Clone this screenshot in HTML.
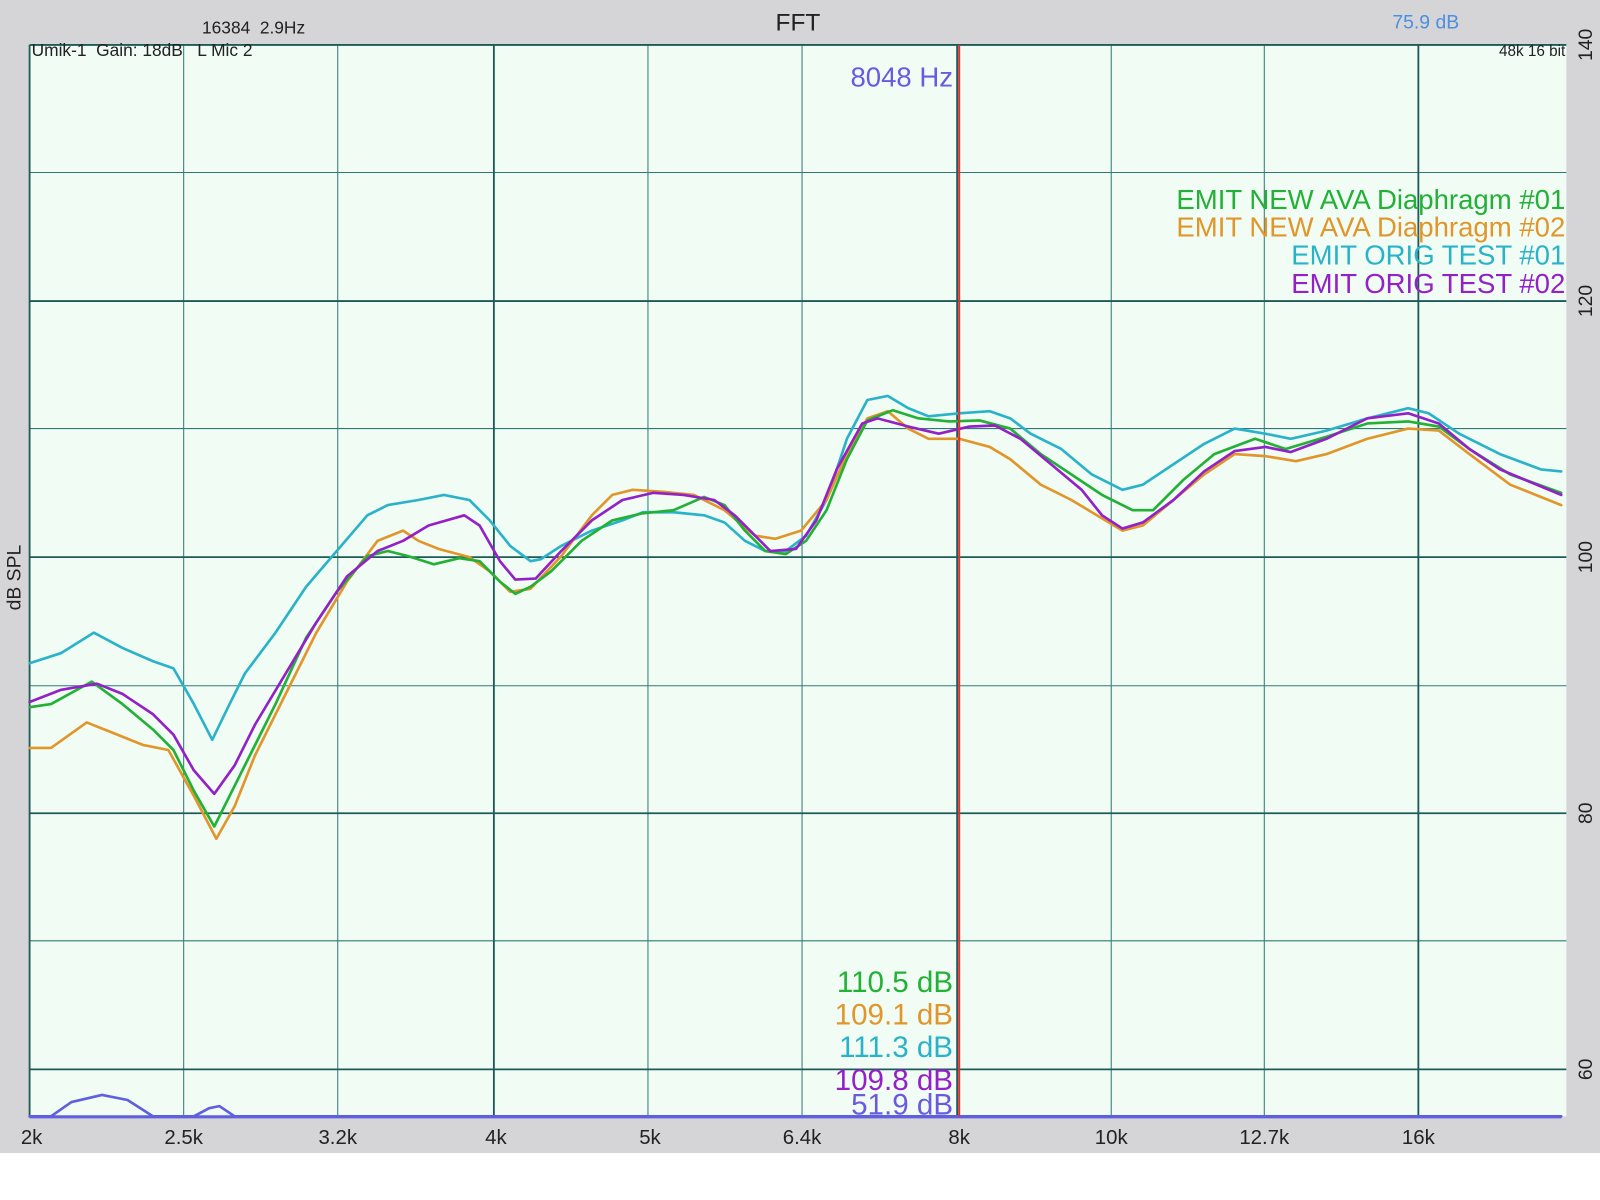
<!DOCTYPE html>
<html><head><meta charset="utf-8"><style>
html,body{margin:0;padding:0;background:#fff;width:1600px;height:1200px;overflow:hidden}
svg{display:block}
text{font-family:"Liberation Sans",sans-serif;white-space:pre}
</style></head><body>
<svg width="1600" height="1200" viewBox="0 0 1568 1176" preserveAspectRatio="none">
<rect x="0" y="0" width="1568" height="1130" fill="#d5d5d7"/>
<rect x="29" y="44" width="1506" height="1050" fill="#f1fcf5"/>
<g stroke="#2f7a78" stroke-width="1">
<line x1="180" y1="44" x2="180" y2="1094"/><line x1="331" y1="44" x2="331" y2="1094"/>
<line x1="635" y1="44" x2="635" y2="1094"/><line x1="786" y1="44" x2="786" y2="1094"/>
<line x1="1089" y1="44" x2="1089" y2="1094"/><line x1="1239" y1="44" x2="1239" y2="1094"/>
<line x1="29" y1="169" x2="1535" y2="169"/><line x1="29" y1="420" x2="1535" y2="420"/>
<line x1="29" y1="672" x2="1535" y2="672"/><line x1="29" y1="922" x2="1535" y2="922"/>
</g>
<g stroke="#1d5a58" stroke-width="1.8">
<line x1="29" y1="44" x2="29" y2="1094"/><line x1="484" y1="44" x2="484" y2="1094"/>
<line x1="938" y1="44" x2="938" y2="1094"/><line x1="1390" y1="44" x2="1390" y2="1094"/>
<line x1="29" y1="44" x2="1535" y2="44"/><line x1="29" y1="295" x2="1535" y2="295"/>
<line x1="29" y1="546" x2="1535" y2="546"/><line x1="29" y1="797" x2="1535" y2="797"/>
<line x1="29" y1="1048" x2="1535" y2="1048"/>
</g>
<g fill="none" stroke-width="2.6" stroke-linejoin="round" stroke-linecap="round">
<polyline stroke="#2ab3c8" points="29,650 60,640 92,620 120,635 150,648 170,655 190,690 208,725 225,690 240,660 270,620 300,575 330,540 360,505 380,495 410,490 435,485 460,490 480,510 500,535 520,550 530,548 550,535 580,520 610,510 630,502 660,502 690,505 710,512 730,530 750,540 770,540 790,525 810,490 830,430 850,392 870,388 890,400 910,408 940,405 970,403 990,410 1010,425 1040,440 1070,465 1100,480 1120,475 1150,455 1180,435 1210,420 1240,425 1265,430 1300,422 1340,410 1380,400 1400,405 1430,425 1470,445 1510,460 1530,462"/>
<polyline stroke="#e0962a" points="29,733 50,733 85,708 110,718 140,730 165,735 190,780 212,822 230,790 250,740 280,680 310,620 340,570 370,530 395,520 410,530 430,538 460,546 480,560 500,580 520,577 550,545 580,505 600,485 620,480 650,482 680,485 710,500 740,525 760,528 785,520 810,490 830,445 850,410 870,403 890,420 910,430 940,430 970,438 990,450 1020,475 1050,490 1080,508 1100,520 1120,515 1150,490 1180,465 1210,445 1240,447 1270,452 1300,445 1340,430 1380,420 1410,422 1440,445 1480,475 1530,495"/>
<polyline stroke="#22b036" points="29,693 50,690 90,668 120,690 150,715 170,735 190,775 210,810 225,780 245,740 270,690 300,625 330,580 360,545 380,540 400,545 425,553 450,547 470,550 490,570 505,582 520,575 540,560 570,530 600,510 630,503 660,500 690,487 710,495 730,520 750,540 770,543 790,530 810,500 830,450 850,412 875,402 900,410 930,413 960,412 990,420 1020,445 1050,465 1080,485 1110,500 1130,500 1160,470 1190,445 1230,430 1260,440 1300,428 1340,415 1380,413 1410,418 1440,440 1480,465 1530,483"/>
<polyline stroke="#9420c8" points="29,688 60,676 95,670 120,680 150,700 170,720 190,755 210,778 230,750 250,710 280,660 310,610 340,565 370,540 395,530 420,515 455,505 470,515 490,550 505,568 525,567 550,540 580,510 610,490 640,483 670,485 700,490 720,505 740,525 755,540 780,538 800,510 820,460 845,415 860,410 890,418 920,425 950,418 975,417 1000,430 1030,455 1060,480 1080,505 1100,518 1120,512 1150,490 1180,462 1210,442 1240,438 1265,443 1300,430 1340,410 1380,405 1410,415 1440,440 1470,460 1530,485"/>
<polyline stroke="#5f5fe0" points="29,1094 50,1094 70,1080 100,1073 125,1078 150,1094 175,1094 190,1094 205,1086 215,1084 230,1094 1530,1094"/>
</g>
<line x1="29" y1="1094.5" x2="1530" y2="1094.5" stroke="#5f5fe0" stroke-width="3"/>
<line x1="940" y1="44" x2="940" y2="1094" stroke="#e03030" stroke-width="2"/>
<text x="782" y="30" font-size="24" fill="#222" text-anchor="middle">FFT</text>
<text x="198" y="33" font-size="17" fill="#222">16384  2.9Hz</text>
<text x="31" y="55" font-size="17" fill="#222">Umik-1  Gain: 18dB   L Mic 2</text>
<text x="1430" y="28" font-size="19" fill="#4a8fe0" text-anchor="end">75.9 dB</text>
<text x="1534" y="55" font-size="15" fill="#222" text-anchor="end">48k 16 bit</text>
<text x="934" y="85" font-size="27" fill="#6a5ae0" text-anchor="end">8048 Hz</text>
<g font-size="27" text-anchor="end">
<text x="1534" y="205" fill="#22b036">EMIT NEW AVA Diaphragm #01</text>
<text x="1534" y="232" fill="#e0962a">EMIT NEW AVA Diaphragm #02</text>
<text x="1534" y="259" fill="#2ab3c8">EMIT ORIG TEST #01</text>
<text x="1534" y="287" fill="#9420c8">EMIT ORIG TEST #02</text>
</g>
<g font-size="29" text-anchor="end">
<text x="934" y="972" fill="#22b036">110.5 dB</text>
<text x="934" y="1004" fill="#e0962a">109.1 dB</text>
<text x="934" y="1036" fill="#2ab3c8">111.3 dB</text>
<text x="934" y="1068" fill="#9420c8">109.8 dB</text>
<text x="934" y="1092" fill="#6a5ae0">51.9 dB</text>
</g>
<g font-size="20" fill="#222" text-anchor="middle">
<text x="31" y="1121">2k</text><text x="180" y="1121">2.5k</text><text x="331" y="1121">3.2k</text>
<text x="486" y="1121">4k</text><text x="637" y="1121">5k</text><text x="786" y="1121">6.4k</text>
<text x="940" y="1121">8k</text><text x="1089" y="1121">10k</text><text x="1239" y="1121">12.7k</text>
<text x="1390" y="1121">16k</text>
</g>
<g font-size="19" fill="#222" text-anchor="middle">
<text transform="translate(1560,44) rotate(-90)">140</text>
<text transform="translate(1560,295) rotate(-90)">120</text>
<text transform="translate(1560,546) rotate(-90)">100</text>
<text transform="translate(1560,797) rotate(-90)">80</text>
<text transform="translate(1560,1048) rotate(-90)">60</text>
<text transform="translate(20,566) rotate(-90)">dB SPL</text>
</g>
</svg>
</body></html>
